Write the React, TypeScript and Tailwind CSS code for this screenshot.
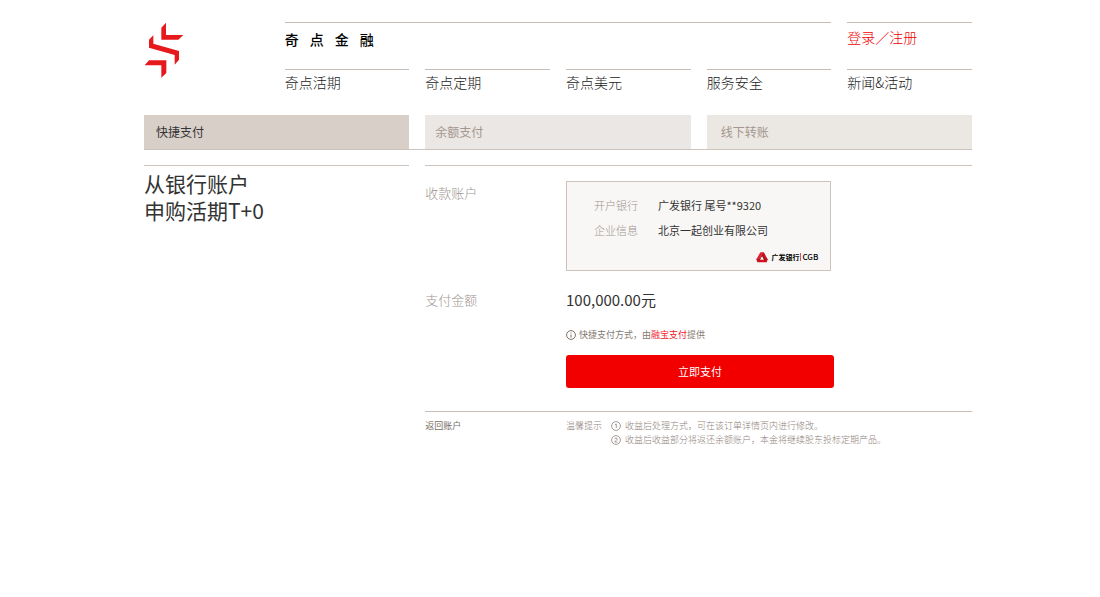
import { useState } from "react";

const navItems = ["奇点活期", "奇点定期", "奇点美元", "服务安全", "新闻&活动"];

const tabs = [
  { label: "快捷支付", style: "bg-[#d8cfc9] pl-3 text-[#333]" },
  { label: "余额支付", style: "bg-[#ebe7e4] pl-2.5 text-[#a3968e]" },
  { label: "线下转账", style: "bg-[#ebe8e3] pl-3.5 text-[#a3968e]" },
];

const tips = [
  "收益后处理方式，可在该订单详情页内进行修改。",
  "收益后收益部分将返还余额账户，本金将继续股东投标定期产品。",
];

function BrandMark() {
  return (
    <svg viewBox="15 20 120 168" className="h-14 w-10" fill="#e6191c" aria-hidden="true">
      <polygon points="67,37 81,22 81,59 133,59 118,73 67,73" />
      <polygon points="30,73 43,60 43,85 120,107 120,133 107,148 107,119 30,97" />
      <polygon points="17,150 30,135 82,135 82,173 67,187 67,150" />
    </svg>
  );
}

function BankMark() {
  return (
    <svg viewBox="0 0 36 33" className="h-[11px] w-3" aria-hidden="true">
      <path d="M13 1h10l5 9-5 5-5-7-9 16H2L1 22z" fill="#e0202c" />
      <path d="M23 1l12 21-3 9-6-2-9-19z" fill="#c5101f" />
      <path d="M1 22l8-1h19l4 10H4z" fill="#d0101e" />
      <path d="M9 24l9-16 3 6-5 8zM28 24l-7-10-3 3 4 7z" fill="#8a0c16" />
      <path d="M18 13l6 10H12z" fill="#f8f7f5" />
    </svg>
  );
}

function InfoIcon() {
  return (
    <svg viewBox="0 0 20 20" className="size-[10px] shrink-0" fill="none" stroke="#7d716a" strokeWidth="2" aria-hidden="true">
      <circle cx="10" cy="10" r="8.8" />
      <path d="M10 9v6M10 5v2" />
    </svg>
  );
}

function NumberIcon({ value }: { value: number }) {
  return (
    <svg viewBox="0 0 20 20" className="size-[10px] shrink-0" fill="none" stroke="#8f837c" strokeWidth="1.6" aria-hidden="true">
      <circle cx="10" cy="10" r="8.8" />
      {value === 1 ? <path d="M8 7.5l2.5-1.5v8" /> : <path d="M7.5 8c0-3 5-3 5 0 0 2-5 4-5 6h5.5" />}
    </svg>
  );
}

export default function App() {
  const [active, setActive] = useState(0);

  return (
    <div className="min-h-screen bg-white pt-[22px] pr-32 pb-10 pl-36 font-['Noto_Sans_CJK_SC','Noto_Sans',sans-serif] text-[#333]">
      <header className="grid grid-cols-6 gap-x-4">
        <a href="#" aria-label="奇点金融" className="row-span-2">
          <BrandMark />
        </a>
        <div className="col-span-4 h-[47px] border-t border-[#c9beb6] pt-[7px]">
          <div className="flex gap-[11px] text-[14px] leading-[18px] font-medium text-black">
            <span>奇</span>
            <span>点</span>
            <span>金</span>
            <span>融</span>
          </div>
        </div>
        <div className="flex items-start border-t border-[#c9beb6] pt-1">
          <a href="#" className="text-[14px] leading-5 font-light whitespace-nowrap text-[#ec0000]">
            登录／注册
          </a>
        </div>
        <nav className="col-span-5 grid h-[46px] grid-cols-5 gap-x-4">
          {navItems.map((item) => (
            <a
              key={item}
              href="#"
              className="border-t border-[#c9beb6] pt-0.5 text-[14px] leading-5 font-light whitespace-nowrap text-[#222]"
            >
              {item}
            </a>
          ))}
        </nav>
      </header>

      <div role="tablist" className="grid grid-cols-3 gap-x-4 border-b border-[#cdc3bb]">
        {tabs.map((tab, index) => (
          <button
            key={tab.label}
            type="button"
            role="tab"
            aria-selected={active === index}
            onClick={() => setActive(index)}
            className={`h-[34px] text-left text-[12px] leading-4 ${tab.style}`}
          >
            {tab.label}
          </button>
        ))}
      </div>

      <main className="mt-[15px] grid grid-cols-3 gap-x-4">
        <h1 className="self-start border-t border-[#cdc3bb] pt-1 text-[21px] leading-[27px]">
          从银行账户
          <br />
          申购活期T+0
        </h1>

        <div className="col-span-2 border-t border-[#cdc3bb]">
          <section className="grid grid-cols-4 gap-x-4 pt-[15px]">
            <h2 className="pt-[3px] text-[13px] leading-[18px] font-light text-[#a0958f]">收款账户</h2>
            <div className="col-span-2 border border-[#cdc3bb] bg-[#f8f7f5] pt-[11px] pr-3 pb-[7px] pl-[27px]">
              <dl className="grid grid-cols-[64px_1fr] text-[11px] leading-[25px]">
                <dt className="font-light text-[#a0958f]">开户银行</dt>
                <dd className="whitespace-nowrap">广发银行 尾号**9320</dd>
                <dt className="font-light text-[#a0958f]">企业信息</dt>
                <dd className="whitespace-nowrap">北京一起创业有限公司</dd>
              </dl>
              <div className="mt-2 flex items-center justify-end text-[7px] leading-3 text-black">
                <BankMark />
                <span className="ml-[3px] font-bold">广发银行</span>
                <span className="mx-px h-2 w-px bg-[#d9555c]" />
                <span className="text-[8px] font-medium">CGB</span>
              </div>
            </div>

            <h2 className="col-start-1 mt-5 text-[13px] leading-[18px] font-light text-[#a0958f]">支付金额</h2>
            <p className="col-span-3 mt-5 text-[15px] leading-[18px]">100,000.00元</p>

            <p className="col-span-3 col-start-2 mt-[19px] flex items-center gap-[3px] text-[9px] leading-[14px] text-[#857972]">
              <InfoIcon />
              <span>
                快捷支付方式，由
                <a href="#" className="text-[#f0202a]">
                  融宝支付
                </a>
                提供
              </span>
            </p>
            <button
              type="button"
              className="col-span-3 col-start-2 mt-[13px] h-[33px] w-[268px] rounded-[3px] bg-[#f20000] pb-0.5 text-[11px] leading-4 text-white"
            >
              立即支付
            </button>
          </section>

          <footer className="mt-[23px] grid grid-cols-4 gap-x-4 border-t border-[#c9beb6] pt-[7px] text-[9px] leading-[14px]">
            <a href="#" className="text-[#7a6e68]">
              返回账户
            </a>
            <div className="col-span-3 flex gap-[9px] font-light text-[#8f837c]">
              <span className="shrink-0">温馨提示</span>
              <ol>
                {tips.map((tip, index) => (
                  <li key={tip} className="flex items-center gap-1">
                    <NumberIcon value={index + 1} />
                    <span>{tip}</span>
                  </li>
                ))}
              </ol>
            </div>
          </footer>
        </div>
      </main>
    </div>
  );
}
